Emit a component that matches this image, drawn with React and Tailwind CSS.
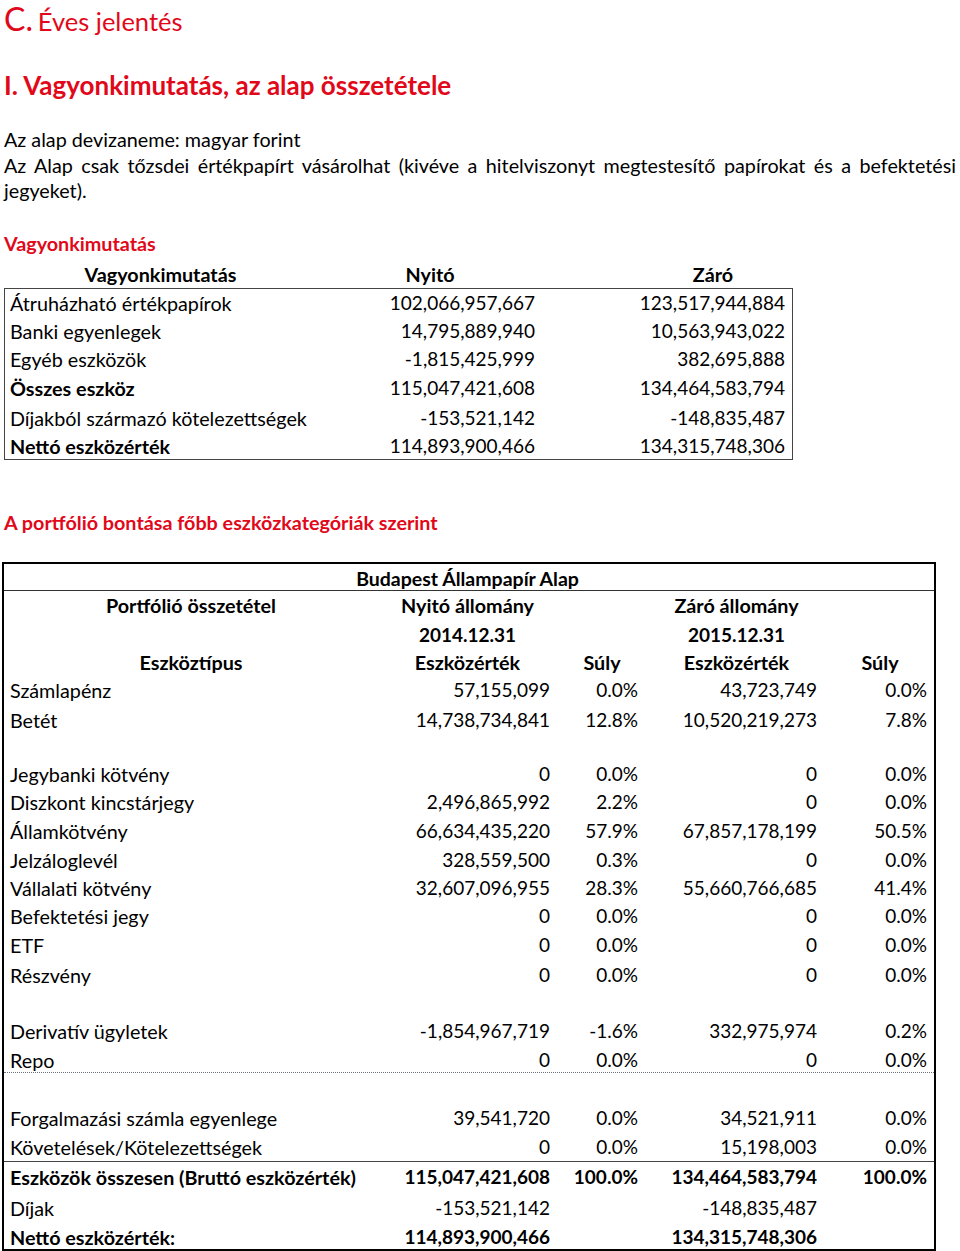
// Éves jelentés - vagyonkimutatás és portfólió összetétel
import React from 'react';

const assetRows = [
  { label: 'Átruházható értékpapírok', open: '102,066,957,667', close: '123,517,944,884', h: 'h-[28px]' },
  { label: 'Banki egyenlegek', open: '14,795,889,940', close: '10,563,943,022', h: 'h-[28px]' },
  { label: 'Egyéb eszközök', open: '-1,815,425,999', close: '382,695,888', h: 'h-[29px]' },
  { label: 'Összes eszköz', open: '115,047,421,608', close: '134,464,583,794', h: 'h-[30px]', bold: true },
  { label: 'Díjakból származó kötelezettségek', open: '-153,521,142', close: '-148,835,487', h: 'h-[28px]' },
  { label: 'Nettó eszközérték', open: '114,893,900,466', close: '134,315,748,306', h: 'h-[27px]', bold: true },
];

const portfolioRows = [
  { label: 'Számlapénz', o: '57,155,099', os: '0.0%', c: '43,723,749', cs: '0.0%', h: 'h-[30px]' },
  { label: 'Betét', o: '14,738,734,841', os: '12.8%', c: '10,520,219,273', cs: '7.8%', h: 'h-[28px]' },
  { empty: true, h: 'h-[26px]' },
  { label: 'Jegybanki kötvény', o: '0', os: '0.0%', c: '0', cs: '0.0%', h: 'h-[28px]' },
  { label: 'Diszkont kincstárjegy', o: '2,496,865,992', os: '2.2%', c: '0', cs: '0.0%', h: 'h-[29px]' },
  { label: 'Államkötvény', o: '66,634,435,220', os: '57.9%', c: '67,857,178,199', cs: '50.5%', h: 'h-[29px]' },
  { label: 'Jelzáloglevél', o: '328,559,500', os: '0.3%', c: '0', cs: '0.0%', h: 'h-[28px]' },
  { label: 'Vállalati kötvény', o: '32,607,096,955', os: '28.3%', c: '55,660,766,685', cs: '41.4%', h: 'h-[28px]' },
  { label: 'Befektetési jegy', o: '0', os: '0.0%', c: '0', cs: '0.0%', h: 'h-[29px]' },
  { label: 'ETF', o: '0', os: '0.0%', c: '0', cs: '0.0%', h: 'h-[30px]' },
  { label: 'Részvény', o: '0', os: '0.0%', c: '0', cs: '0.0%', h: 'h-[28px]' },
  { empty: true, h: 'h-[28px]' },
  { label: 'Derivatív ügyletek', o: '-1,854,967,719', os: '-1.6%', c: '332,975,974', cs: '0.2%', h: 'h-[29px]' },
  { label: 'Repo', o: '0', os: '0.0%', c: '0', cs: '0.0%', h: 'h-[27px]', line: 'border-b border-dotted border-gray-500' },
  { empty: true, h: 'h-[31px]' },
  { label: 'Forgalmazási számla egyenlege', o: '39,541,720', os: '0.0%', c: '34,521,911', cs: '0.0%', h: 'h-[29px]' },
  { label: 'Követelések/Kötelezettségek', o: '0', os: '0.0%', c: '15,198,003', cs: '0.0%', h: 'h-[29px]', line: 'border-b border-[#444]' },
  { label: 'Eszközök összesen (Bruttó eszközérték)', o: '115,047,421,608', os: '100.0%', c: '134,464,583,794', cs: '100.0%', h: 'h-[32px]', bold: true },
  { label: 'Díjak', o: '-153,521,142', os: '', c: '-148,835,487', cs: '', h: 'h-[29px]' },
  { label: 'Nettó eszközérték:', o: '114,893,900,466', os: '', c: '134,315,748,306', cs: '', h: 'h-[26px]', bold: true },
];

const cols = 'grid grid-cols-[374px_179px_90px_179px_108px]';

const App = () => {
  return (
    <div className="w-[960px] min-h-[1251px] bg-white text-black font-['Lato','Liberation_Sans',sans-serif] text-[19px]">
      {/* Fejlécek */}
      <div className="pt-[3px] pl-[4px] h-[37px] leading-[32px] text-[#e1081a]">
        <span className="text-[32px]">C.</span>{' '}
        <span className="text-[25.5px]">Éves jelentés</span>
      </div>
      <h2 className="mt-[32px] pl-[4px] leading-[32px] text-[26px] font-bold text-[#e1081a]">
        I. Vagyonkimutatás, az alap összetétele
      </h2>

      <div className="mt-[26px] px-[4px] leading-[25.5px] text-[19.75px] text-justify">
        <p>Az alap devizaneme: magyar forint</p>
        <p>
          Az Alap csak tőzsdei értékpapírt vásárolhat (kivéve a hitelviszonyt megtestesítő papírokat és a befektetési
          jegyeket).
        </p>
      </div>

      {/* Vagyonkimutatás */}
      <h3 className="mt-[27px] pl-[4px] leading-[26px] text-[19.75px] font-bold text-[#e1081a]">Vagyonkimutatás</h3>
      <div className="mt-[3px] ml-[5px] grid grid-cols-[311px_228px_338px] h-[28px] items-center text-[19.75px] font-bold">
        <div className="text-center">Vagyonkimutatás</div>
        <div className="text-center">Nyitó</div>
        <div className="text-center">Záró</div>
      </div>
      <div className="ml-[4px] w-[789px] border border-[#444]">
        {assetRows.map((row) => (
          <div key={row.label} className={`grid grid-cols-[311px_228px_248px] items-center ${row.h}`}>
            <div className={`pl-[5px] whitespace-nowrap text-[19.75px] ${row.bold ? 'font-bold' : ''}`}>{row.label}</div>
            <div className="pr-[9px] text-right">{row.open}</div>
            <div className="pr-[7px] text-right">{row.close}</div>
          </div>
        ))}
      </div>

      {/* Portfólió bontás */}
      <h3 className="mt-[50px] pl-[4px] leading-[26px] text-[19.75px] font-bold text-[#e1081a]">
        A portfólió bontása főbb eszközkategóriák szerint
      </h3>
      <div className="mt-[26px] ml-[2px] w-[934px] border-2 border-black">
        <div className={`${cols} h-[27px] items-center border-b border-[#333] text-[19.5px] font-bold`}>
          <div />
          <div className="flex justify-center whitespace-nowrap">Budapest Állampapír Alap</div>
        </div>
        <div className={`${cols} h-[30px] items-center text-[19.75px] font-bold`}>
          <div className="text-center">Portfólió összetétel</div>
          <div className="text-center whitespace-nowrap">Nyitó állomány</div>
          <div />
          <div className="text-center whitespace-nowrap">Záró állomány</div>
          <div />
        </div>
        <div className={`${cols} h-[27px] items-center font-bold`}>
          <div />
          <div className="text-center">2014.12.31</div>
          <div />
          <div className="text-center">2015.12.31</div>
          <div />
        </div>
        <div className={`${cols} h-[28px] items-center text-[19.75px] font-bold`}>
          <div className="text-center">Eszköztípus</div>
          <div className="text-center">Eszközérték</div>
          <div className="text-center">Súly</div>
          <div className="text-center">Eszközérték</div>
          <div className="text-center">Súly</div>
        </div>
        {portfolioRows.map((row, i) =>
          row.empty ? (
            <div key={i} className={row.h} />
          ) : (
            <div key={i} className={`${cols} items-center ${row.h} ${row.line || ''} ${row.bold ? 'font-bold' : ''}`}>
              <div className="pl-[6px] whitespace-nowrap text-[19.75px]">{row.label}</div>
              <div className="pr-[7px] text-right">{row.o}</div>
              <div className="pr-[9px] text-right">{row.os}</div>
              <div className="pr-[9px] text-right">{row.c}</div>
              <div className="pr-[7px] text-right">{row.cs}</div>
            </div>
          )
        )}
      </div>
    </div>
  );
};

export default App;
